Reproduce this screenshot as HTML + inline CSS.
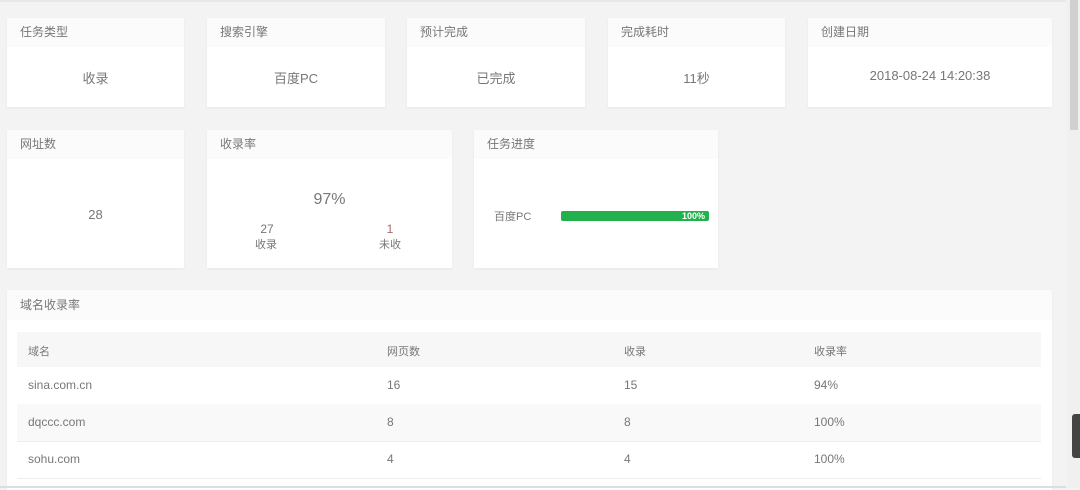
<!DOCTYPE html>
<html><head><meta charset="utf-8"><style>
body{margin:0;width:1080px;height:488px;overflow:hidden;background:#f3f3f3;font-family:"Liberation Sans","Noto Sans CJK SC",sans-serif;color:#777;position:relative}
.c{position:absolute;background:#fff;box-shadow:0 1px 2px rgba(0,0,0,.05)}
.h{height:29px;background:#fbfbfb;font-size:12px;line-height:29px;padding-left:13px;color:#777}
.v{position:absolute;left:0;right:0;text-align:center;font-size:13px;color:#777}
.t{position:absolute;font-size:12px;color:#777}
.row{position:absolute;left:10px;width:1024px;height:37px;border-bottom:1px solid #eee}
</style></head><body>
<div style="position:absolute;left:0;top:0;width:1066px;height:2px;background:#e8e8e8"></div>
<div style="position:absolute;left:1067px;top:0;width:13px;height:488px;background:#f0f0f0"></div>
<div style="position:absolute;left:1070px;top:0;width:8px;height:130px;background:#d0d0d0"></div>
<div style="position:absolute;left:1072px;top:414px;width:8px;height:44px;background:#444;border-radius:3px 0 0 3px"></div>

<div class="c" style="left:7px;top:18px;width:177px;height:89px"><div class="h">任务类型</div><div class="v" style="top:50px">收录</div></div>
<div class="c" style="left:207px;top:18px;width:178px;height:89px"><div class="h">搜索引擎</div><div class="v" style="top:50px">百度PC</div></div>
<div class="c" style="left:407px;top:18px;width:178px;height:89px"><div class="h">预计完成</div><div class="v" style="top:50px">已完成</div></div>
<div class="c" style="left:608px;top:18px;width:177px;height:89px"><div class="h">完成耗时</div><div class="v" style="top:50px">11秒</div></div>
<div class="c" style="left:808px;top:18px;width:244px;height:89px"><div class="h">创建日期</div><div class="v" style="top:50px">2018-08-24 14:20:38</div></div>

<div class="c" style="left:7px;top:130px;width:177px;height:138px"><div class="h">网址数</div><div class="v" style="top:77px">28</div></div>
<div class="c" style="left:207px;top:130px;width:245px;height:138px"><div class="h">收录率</div>
<div class="v" style="top:61px;font-size:16px">97%</div>
<div class="t" style="left:50px;top:92px;width:20px;text-align:center">27</div>
<div class="t" style="left:48px;top:106px;font-size:11px">收录</div>
<div class="t" style="left:178px;top:92px;width:10px;text-align:center;color:#a66">1</div>
<div class="t" style="left:172px;top:106px;font-size:11px">未收</div></div>
<div class="c" style="left:474px;top:130px;width:244px;height:138px"><div class="h">任务进度</div>
<div class="t" style="left:20px;top:78px;font-size:11px">百度PC</div>
<div style="position:absolute;left:87px;top:81px;width:148px;height:10px;background:#22b14c;border-radius:2px;color:#fff;font-size:9px;font-weight:bold;line-height:10px;text-align:right;box-sizing:border-box;padding-right:4px">100%</div></div>

<div class="c" style="left:7px;top:290px;width:1045px;height:200px"><div class="h" style="height:30px;line-height:30px">域名收录率</div>
<div class="row" style="top:42px;height:35px;background:#f7f7f7;border:none"></div>
<div class="t" style="left:21px;top:53px;font-size:11px">域名</div><div class="t" style="left:380px;top:53px;font-size:11px">网页数</div><div class="t" style="left:617px;top:53px;font-size:11px">收录</div><div class="t" style="left:807px;top:53px;font-size:11px">收录率</div>
<div class="row" style="top:77px"></div>
<div class="t" style="left:21px;top:88px">sina.com.cn</div><div class="t" style="left:380px;top:88px">16</div><div class="t" style="left:617px;top:88px">15</div><div class="t" style="left:807px;top:88px">94%</div>
<div class="row" style="top:114px;background:#f9f9f9"></div>
<div class="t" style="left:21px;top:125px">dqccc.com</div><div class="t" style="left:380px;top:125px">8</div><div class="t" style="left:617px;top:125px">8</div><div class="t" style="left:807px;top:125px">100%</div>
<div class="row" style="top:151px"></div>
<div class="t" style="left:21px;top:162px">sohu.com</div><div class="t" style="left:380px;top:162px">4</div><div class="t" style="left:617px;top:162px">4</div><div class="t" style="left:807px;top:162px">100%</div>
</div>
<div style="position:absolute;left:0;top:486px;width:1066px;height:2px;background:#ddd"></div>
</body></html>
